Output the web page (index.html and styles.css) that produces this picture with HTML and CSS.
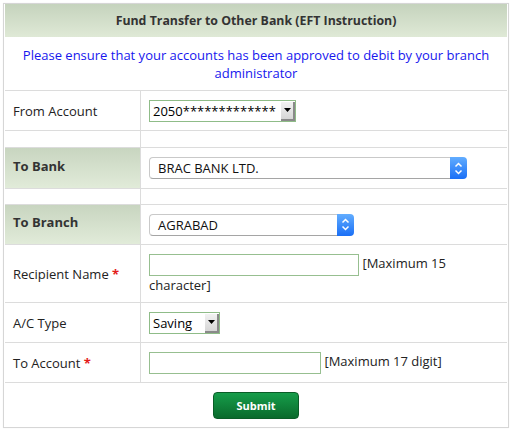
FILE: index.html
```html
<!DOCTYPE html>
<html>
<head>
<meta charset="utf-8">
<link rel="stylesheet" href="styles.css">
</head>
<body>
<div class="panel">
  <div class="head">Fund Transfer to Other Bank (EFT Instruction)</div>
  <div class="notice">Please ensure that your accounts has been approved to debit by your branch administrator</div>

  <div class="row h39">
    <div class="lbl">From Account</div>
    <div class="val">
      <div class="osel w-acc"><span class="otxt">2050*************</span><span class="obtn"><svg width="7" height="4" viewBox="0 0 7 4"><polygon points="0,0 7,0 3.5,4" fill="#000"/></svg></span></div>
    </div>
  </div>
  <div class="row h16"><div class="lbl"></div><div class="val"></div></div>

  <div class="row h40">
    <div class="lbl hl">To Bank</div>
    <div class="val">
      <div class="msel w-bank"><span class="mtxt">BRAC BANK LTD.</span><span class="step"><svg width="9" height="13" viewBox="0 0 9 13"><polyline points="1.5,4.5 4.5,1.5 7.5,4.5" fill="none" stroke="#fff" stroke-width="1.5"/><polyline points="1.5,8.5 4.5,11.5 7.5,8.5" fill="none" stroke="#fff" stroke-width="1.5"/></svg></span></div>
    </div>
  </div>
  <div class="row h15"><div class="lbl"></div><div class="val"></div></div>

  <div class="row h39">
    <div class="lbl hl">To Branch</div>
    <div class="val">
      <div class="msel w-branch"><span class="mtxt">AGRABAD</span><span class="step"><svg width="9" height="13" viewBox="0 0 9 13"><polyline points="1.5,4.5 4.5,1.5 7.5,4.5" fill="none" stroke="#fff" stroke-width="1.5"/><polyline points="1.5,8.5 4.5,11.5 7.5,8.5" fill="none" stroke="#fff" stroke-width="1.5"/></svg></span></div>
    </div>
  </div>

  <div class="row h57">
    <div class="lbl">Recipient Name <span class="req">*</span></div>
    <div class="val">
      <div class="wrap"><input class="inp w-name" type="text"> [Maximum 15 character]</div>
    </div>
  </div>

  <div class="row h39">
    <div class="lbl">A/C Type</div>
    <div class="val">
      <div class="osel w-type"><span class="otxt">Saving</span><span class="obtn"><svg width="7" height="4" viewBox="0 0 7 4"><polygon points="0,0 7,0 3.5,4" fill="#000"/></svg></span></div>
    </div>
  </div>

  <div class="row h39">
    <div class="lbl">To Account <span class="req">*</span></div>
    <div class="val">
      <div class="wrap"><input class="inp w-acct" type="text"> [Maximum 17 digit]</div>
    </div>
  </div>

  <div class="row foot">
    <button class="submit" type="button">Submit</button>
  </div>
</div>
</body>
</html>
```

FILE: styles.css
```css
html, body {
  margin: 0;
  padding: 0;
  background: #fff;
}
body {
  font-family: "Open Sans", "Liberation Sans", sans-serif;
  font-size: 13px;
  color: #222;
}
.panel {
  margin: 3px;
  width: 502px;
  border: 1px solid #d6d6d6;
  padding: 0 1px;
  box-shadow: 0 0 1px rgba(0,0,0,0.08);
}
.head {
  height: 33px;
  line-height: 33px;
  text-align: center;
  font-weight: bold;
  font-size: 12.35px;
  color: #333;
  background: linear-gradient(#c5d3bd, #dfe9d6);
}
.notice {
  height: 53px;
  box-sizing: border-box;
  padding: 9px 12px 0;
  line-height: 18px;
  text-align: center;
  color: #1717ee;
}
.row {
  display: flex;
  border-top: 1px solid #dcdcdc;
}
.h15 { height: 15px; }
.h16 { height: 16px; }
.h39 { height: 39px; }
.h40 { height: 40px; }
.h57 { height: 57px; }
.lbl {
  width: 136px;
  box-sizing: border-box;
  padding-left: 8px;
  border-right: 1px solid #dcdcdc;
  display: flex;
  align-items: center;
  white-space: pre;
}
.lbl.hl {
  font-weight: bold;
  color: #333;
  background: linear-gradient(#c8d5c0, #e1ebd9);
  padding-bottom: 5px;
}
.req {
  color: #e31b1b;
  font-weight: bold;
}
.val {
  flex: 1;
  padding-left: 8px;
  padding-right: 8px;
  display: flex;
  align-items: center;
}
.wrap {
  line-height: 18px;
  padding-top: 1px;
}
.osel {
  display: flex;
  height: 22px;
  box-sizing: border-box;
  border: 1px solid #8fbc88;
  background: #fff;
}
.w-acc { width: 147px; }
.w-type { width: 71px; }
.otxt {
  flex: 1;
  padding-left: 3px;
  line-height: 20px;
  color: #000;
  white-space: nowrap;
  overflow: hidden;
}
.obtn {
  width: 12px;
  margin: 1px 0 0 0;
  background: linear-gradient(#f2f2f2, #d6d6d6);
  border-right: 2px solid #8a8a8a;
  border-bottom: 2px solid #8a8a8a;
  display: flex;
  align-items: center;
  justify-content: center;
}
.msel {
  display: flex;
  height: 22px;
}
.w-bank { width: 318px; }
.w-branch { width: 205px; }
.mtxt {
  flex: 1;
  box-sizing: border-box;
  border: 1px solid #c9c9c9;
  border-bottom-color: #a5a5a5;
  border-right: none;
  border-radius: 4px 0 0 4px;
  padding-left: 8px;
  line-height: 20px;
  color: #111;
  background: #fff;
}
.step {
  width: 17px;
  border-radius: 0 4px 4px 0;
  background: linear-gradient(#62adff, #1a6ff6);
  display: flex;
  align-items: center;
  justify-content: center;
}
.inp {
  box-sizing: border-box;
  height: 22px;
  border: 1px solid #97bf90;
  margin: 0;
  padding: 0 3px;
  vertical-align: middle;
  font: inherit;
  outline: none;
}
.w-name { width: 210px; }
.w-acct { width: 172px; }
.foot {
  height: 44px;
  justify-content: center;
  align-items: center;
}
.submit {
  width: 86px;
  height: 27px;
  border: 1px solid #0a5d27;
  border-radius: 4px;
  background: linear-gradient(#169d4a, #0a6a2c);
  color: #fff;
  font-family: "Open Sans", "Liberation Sans", sans-serif;
  font-weight: bold;
  font-size: 11px;
  padding: 0;
  margin-top: 1px;
}
```
